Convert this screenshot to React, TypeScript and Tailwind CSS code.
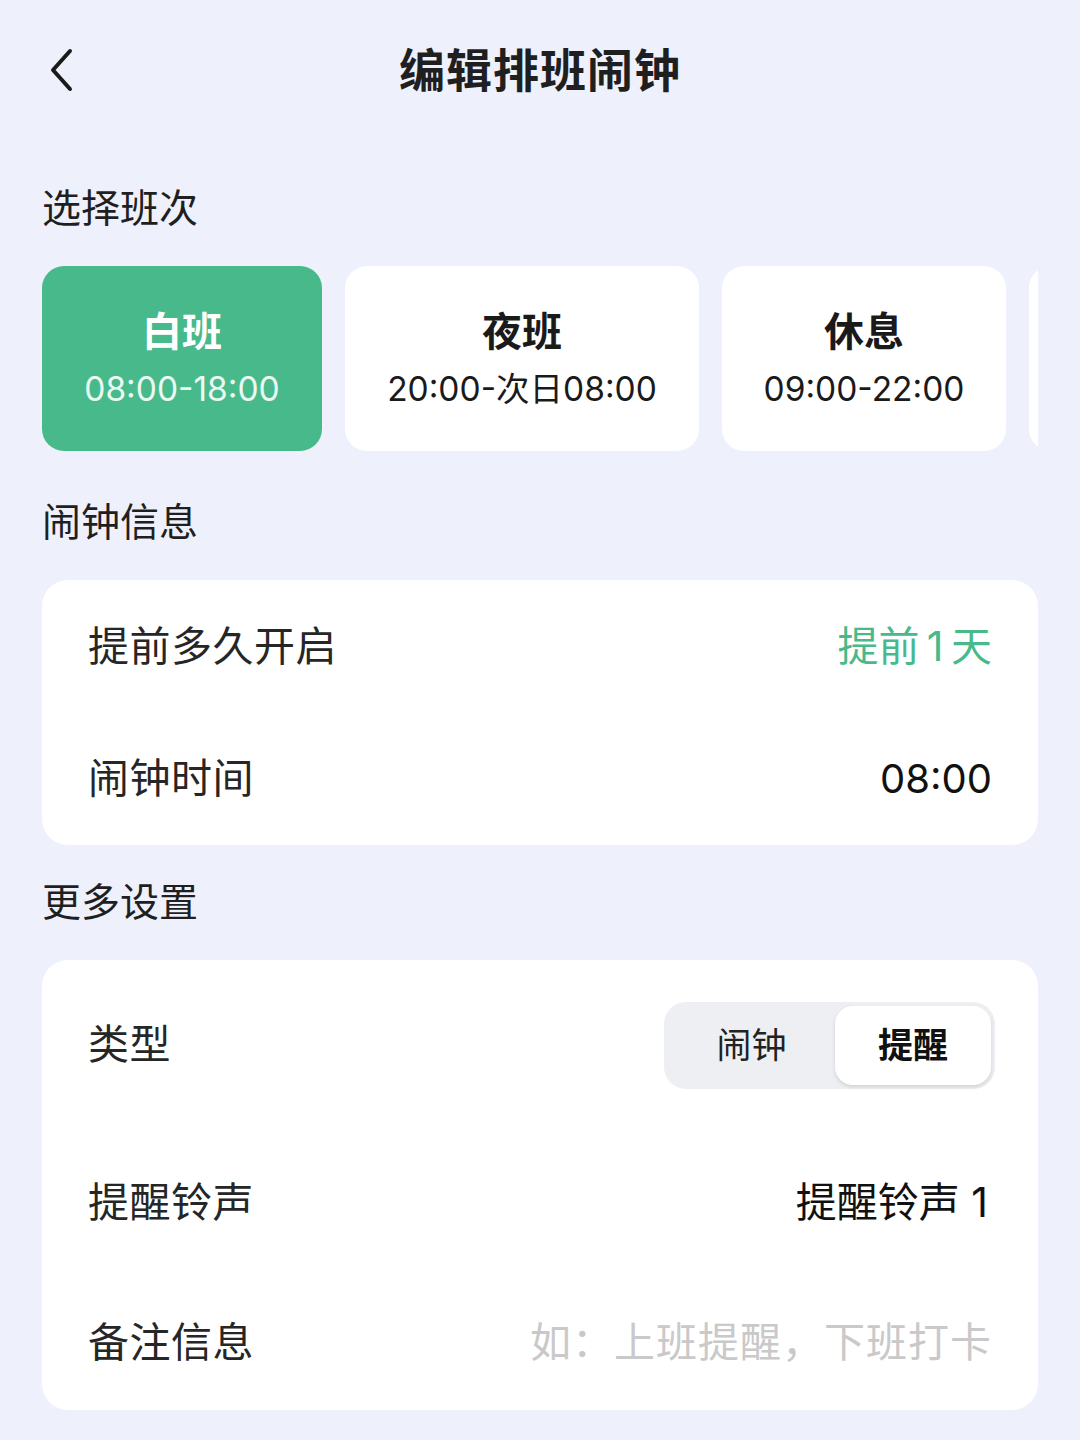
import React from 'react';

const FONT = 'font-["Inter","Noto_Sans_CJK_SC",sans-serif]';

const shifts = [
    { name: '白班', time: '08:00-18:00', width: 'w-[280px]', active: true },
    { name: '夜班', time: '20:00-次日08:00', width: 'w-[354px]', active: false },
    { name: '休息', time: '09:00-22:00', width: 'w-[284px]', active: false },
    { name: '', time: '', width: 'w-[284px]', active: false },
];

const SectionTitle: React.FC<{ children: React.ReactNode; top: string }> = ({ children, top }) => (
    <div className={`${top} pb-[33px] px-[42px]`}>
        <div className="text-[39px] leading-[50px] text-[#1f1f1f]">{children}</div>
    </div>
);

export default function App() {
    return (
        <div className={`${FONT} w-[1080px] min-h-[1440px] bg-[#eef0fb] text-[#1f1f1f]`}>
            {/* Header */}
            <header className="relative h-[140px] flex items-center justify-center">
                <button className="absolute left-[40px] top-[46px] w-[40px] h-[48px] flex items-center justify-center">
                    <svg width="30" height="46" viewBox="0 0 30 46" fill="none">
                        <path d="M25 4 L8 23 L25 42" stroke="#1a1a1a" strokeWidth="4" strokeLinecap="round" strokeLinejoin="round" />
                    </svg>
                </button>
                <h1 className="text-[46px] leading-[56px] font-bold tracking-[1px]">编辑排班闹钟</h1>
            </header>

            <SectionTitle top="pt-[43px]">选择班次</SectionTitle>

            {/* Shift selector */}
            <div className="mx-[42px] overflow-hidden">
                <div className="flex gap-[23px]">
                    {shifts.map((s, i) => (
                        <div
                            key={i}
                            className={`${s.width} shrink-0 h-[185px] rounded-[22px] flex flex-col items-center justify-center gap-[13px] ${
                                s.active ? 'bg-[#48b98a] text-white' : 'bg-white text-[#1a1a1a]'
                            }`}
                        >
                            {s.name && <div className="text-[40px] leading-[48px] font-bold">{s.name}</div>}
                            {s.time && (
                                <div className={`text-[33.5px] leading-[40px] ${s.active ? 'text-[#eafaf2]' : ''}`}>{s.time}</div>
                            )}
                        </div>
                    ))}
                </div>
            </div>

            <SectionTitle top="pt-[46px]">闹钟信息</SectionTitle>

            <div className="mx-[42px] bg-white rounded-[26px] px-[46px]">
                <div className="h-[133px] flex items-center justify-between">
                    <span className="text-[41px] tracking-[0.5px] text-[#262626]">提前多久开启</span>
                    <span className="text-[41px] text-[#48b98a]">提前{'\u2009'}1{'\u2009'}天</span>
                </div>
                <div className="h-[132px] flex items-center justify-between">
                    <span className="text-[41px] tracking-[0.5px] text-[#262626]">闹钟时间</span>
                    <span className="text-[40px] text-[#111]">08:00</span>
                </div>
            </div>

            <SectionTitle top="pt-[32px]">更多设置</SectionTitle>

            <div className="mx-[42px] bg-white rounded-[26px] px-[46px]">
                <div className="h-[170px] flex items-center justify-between">
                    <span className="text-[41px] tracking-[0.5px] text-[#262626]">类型</span>
                    <div className="w-[331px] h-[87px] rounded-[22px] bg-[#eeeff2] flex items-center p-[4px] -mr-[3px]">
                        <div className="flex-1 h-full flex items-center justify-center text-[35px] text-[#222]">闹钟</div>
                        <div className="w-[156px] h-full rounded-[18px] bg-white shadow-[0_2px_4px_rgba(0,0,0,0.12)] flex items-center justify-center text-[35px] font-bold text-[#111]">
                            提醒
                        </div>
                    </div>
                </div>
                <div className="h-[146px] flex items-center justify-between">
                    <span className="text-[41px] tracking-[0.5px] text-[#262626]">提醒铃声</span>
                    <span className="text-[41px] text-[#111] pr-[4px]">提醒铃声 1</span>
                </div>
                <div className="h-[134px] flex items-center justify-between">
                    <span className="text-[41px] tracking-[0.5px] text-[#262626]">备注信息</span>
                    <span className="text-[41px] tracking-[1px] text-[#c9c9c9]">如：上班提醒，下班打卡</span>
                </div>
            </div>
        </div>
    );
}
